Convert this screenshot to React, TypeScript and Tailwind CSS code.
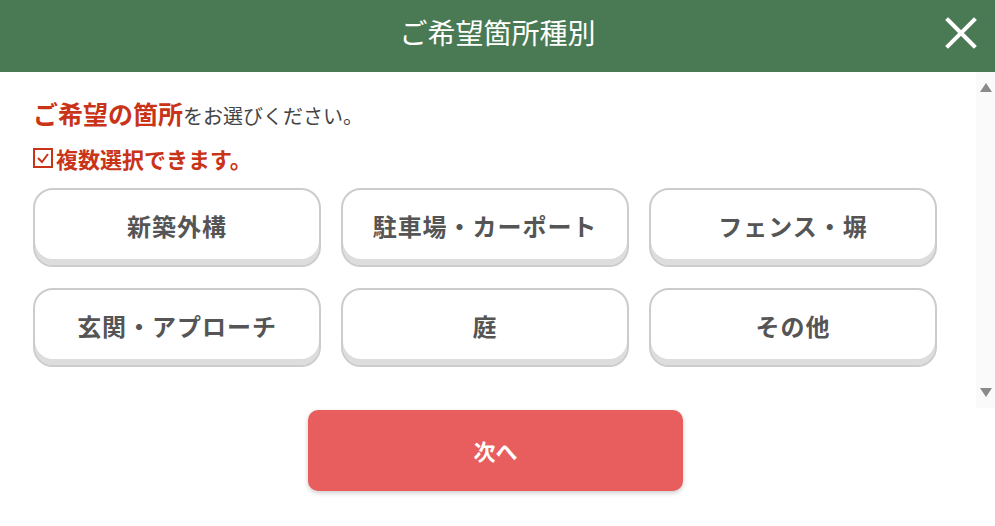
import React from 'react';

const JP = { fontFamily: '"Noto Sans CJK JP", "Noto Sans", sans-serif' };

const PLACES = ['新築外構', '駐車場・カーポート', 'フェンス・塀', '玄関・アプローチ', '庭', 'その他'];

const CloseIcon: React.FC = () => (
  <svg width="34" height="34" viewBox="0 0 34 34" fill="none">
    <path d="M4 4 L30 30 M30 4 L4 30" stroke="#fff" strokeWidth="4" strokeLinecap="square" />
  </svg>
);

const CheckBoxIcon: React.FC = () => (
  <svg width="20" height="20" viewBox="0 0 20 20" fill="none" className="mr-[3px]">
    <rect x="1" y="1" width="18" height="18" stroke="#c93318" strokeWidth="2" />
    <path d="M5 10 L9 14 L15 6" stroke="#c93318" strokeWidth="2" fill="none" />
  </svg>
);

const FakeScrollbar: React.FC = () => (
  <div className="w-[19px] bg-[#fafafa] flex flex-col items-center justify-between py-[11px]">
    <div className="w-0 h-0 border-l-[6px] border-r-[6px] border-b-[9px] border-l-transparent border-r-transparent border-b-[#8a8a8a]" />
    <div className="w-0 h-0 border-l-[6px] border-r-[6px] border-t-[9px] border-l-transparent border-r-transparent border-t-[#8a8a8a]" />
  </div>
);

export default function App() {
  return (
    <div className="w-[995px] h-[526px] bg-white overflow-hidden flex flex-col" style={JP}>
      <header className="h-[72px] bg-[#497a54] flex items-center justify-center relative pb-[8px]">
        <h1 className="text-white text-[28px] leading-none">ご希望箇所種別</h1>
        <button className="absolute right-[17px] top-[16px]">
          <CloseIcon />
        </button>
      </header>

      <div className="h-[336px] flex">
        <div className="flex-1 pl-[33px] pr-[39px] pt-[25px]">
          <p className="leading-[32px] text-[#444]">
            <span className="text-[25px] font-bold text-[#c93318]">ご希望の箇所</span>
            <span className="text-[20px]">をお選びください。</span>
          </p>
          <p className="mt-[9px] leading-[32px] flex items-center text-[22px] font-bold text-[#c93318]">
            <CheckBoxIcon />
            複数選択できます。
          </p>
          <div className="mt-[14px] grid grid-cols-3 gap-x-[20px] gap-y-[21px]">
            {PLACES.map(p => (
              <button
                key={p}
                className="h-[79px] rounded-[20px] border-2 border-[#cccccc] bg-white shadow-[inset_0_-6px_0_#dddddd] pb-[4px] text-[24px] font-bold tracking-[0.04em] text-[#555]"
              >
                {p}
              </button>
            ))}
          </div>
        </div>
        <FakeScrollbar />
      </div>

      <div className="flex justify-center pt-[2px] pr-[4px]">
        <button className="w-[375px] h-[81px] rounded-[10px] bg-[#e85e5e] shadow-[0_2px_5px_rgba(0,0,0,0.2)] text-white text-[22px] font-bold">
          次へ
        </button>
      </div>
    </div>
  );
}
